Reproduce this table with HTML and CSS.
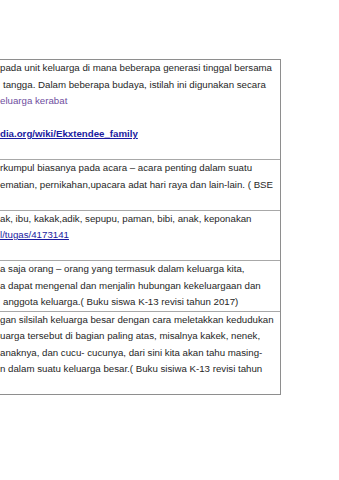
FILE: index.html
```html
<!DOCTYPE html>
<html lang="id">
<head>
<meta charset="utf-8">
<title>Keluarga besar</title>
<link rel="stylesheet" href="styles.css">
</head>
<body>
<div class="page">
  <div class="table">
    <div class="row">
      <div class="line">pada unit keluarga di mana beberapa generasi tinggal bersama</div>
      <div class="line indent">tangga. Dalam beberapa budaya, istilah ini digunakan secara</div>
      <div class="line"><span class="visited">eluarga kerabat</span></div>
      <div class="line">&nbsp;</div>
      <div class="line"><a class="wiki" href="#">dia.org/wiki/Ekxtendee_family</a></div>
      <div class="line">&nbsp;</div>
    </div>
    <div class="row">
      <div class="line">rkumpul biasanya pada acara – acara penting dalam suatu</div>
      <div class="line">ematian, pernikahan,upacara adat hari raya dan lain-lain. ( BSE</div>
      <div class="line">&nbsp;</div>
    </div>
    <div class="row">
      <div class="line">ak, ibu, kakak,adik, sepupu, paman, bibi, anak, keponakan</div>
      <div class="line"><a class="link" href="#">l/tugas/4173141</a></div>
      <div class="line">&nbsp;</div>
    </div>
    <div class="row">
      <div class="line">a saja orang – orang yang termasuk dalam keluarga kita,</div>
      <div class="line">a dapat mengenal dan menjalin hubungan kekeluargaan dan</div>
      <div class="line indent">anggota keluarga.( Buku siswa K-13 revisi tahun 2017)</div>
    </div>
    <div class="row">
      <div class="line">gan silsilah keluarga besar dengan cara meletakkan kedudukan</div>
      <div class="line">uarga tersebut di bagian paling atas, misalnya kakek, nenek,</div>
      <div class="line">anaknya, dan cucu- cucunya, dari sini kita akan tahu masing-</div>
      <div class="line">n dalam suatu keluarga besar.( Buku sisiwa K-13 revisi tahun</div>
      <div class="line">&nbsp;</div>
    </div>
  </div>
</div>
</body>
</html>
```

FILE: styles.css
```css
html, body {
  margin: 0;
  padding: 0;
  background: #ffffff;
  overflow: hidden;
}

.page {
  padding-top: 59px;
  width: 339px;
  height: 480px;
  box-sizing: border-box;
}

.table {
  width: 281px;
  box-sizing: border-box;
  border: 1px solid #8e8e8e;
  border-left: none;
  font-family: "Liberation Sans", Arial, sans-serif;
  font-size: 9.7px;
  color: #262626;
}

.row {
  border-top: 1px solid #a8a8a8;
  overflow: hidden;
}

.row:first-child {
  border-top: none;
}

.line {
  white-space: nowrap;
  line-height: 16.5px;
  height: 16.5px;
}

.indent {
  padding-left: 3px;
}

.visited {
  color: #6f4ea0;
}

.wiki {
  color: #1a1aa0;
  font-weight: bold;
  text-decoration: underline;
}

.link {
  color: #1a1aa0;
  text-decoration: underline;
}
```
